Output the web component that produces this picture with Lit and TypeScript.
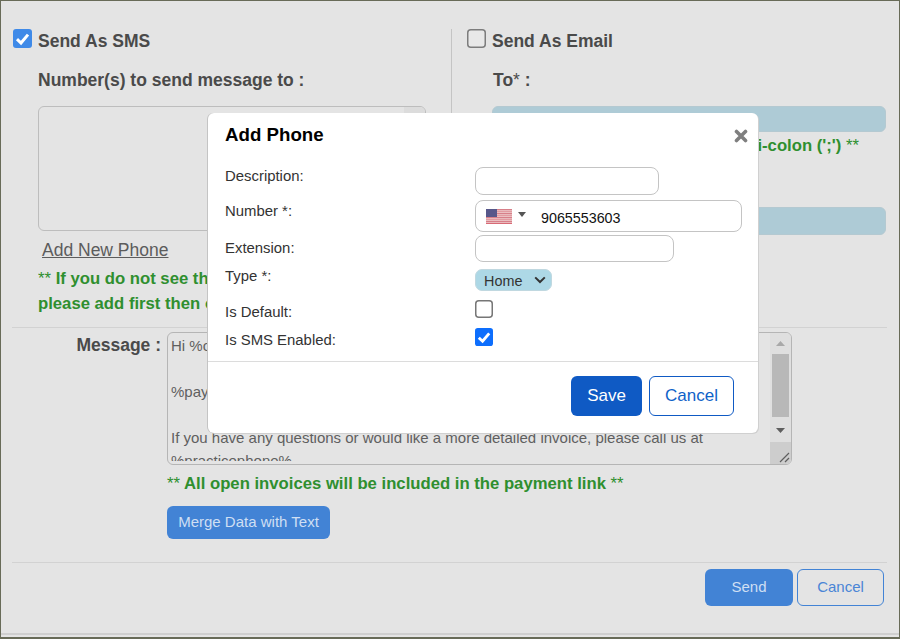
import { LitElement, html, css, svg } from "lit";
import { customElement } from "lit/decorators.js";

const check = svg`<path d="M4 10.2 L8 14 L15 5.6" fill="none" stroke="#fff" stroke-width="3"/>`;

@customElement("app-root")
export class AppRoot extends LitElement {
  static styles = css`
    :host {
      display: block;
      position: relative;
      width: 900px;
      height: 639px;
      box-sizing: border-box;
      background: #e4e4e4;
      border: 1px solid #686b58;
      border-bottom: 2px solid #686b58;
      font-family: "Liberation Sans", Arial, sans-serif;
      color: #4a4a4a;
      overflow: hidden;
    }
    .page {
      height: 634px;
      box-sizing: border-box;
      border-bottom: 2px solid #cfcfcf;
      padding: 0 12px 0 11px;
      display: flex;
      flex-direction: column;
    }
    .top {
      display: grid;
      grid-template-columns: 440px 1fr;
      height: 327px;
      padding-top: 28px;
      box-sizing: border-box;
      border-bottom: 1px solid #d2d2d2;
      flex: none;
    }
    .col-l { border-right: 1px solid #c4c4c4; height: 220px; }
    .col-r { padding-left: 15px; }
    .head { display: flex; align-items: flex-start; gap: 6px; height: 19px; font-size: 17.5px; font-weight: bold; }
    .col-l .head { margin-left: 1px; }
    .head span { line-height: 24px; }
    .box { width: 19px; height: 19px; flex: none; display: block; }
    .sub { font-size: 17.5px; font-weight: bold; margin: 22px 0 0 26px; line-height: 20px; height: 20px; }
    .sub small { font-size: 17.5px; font-weight: normal; }
    .list {
      margin: 16px 0 0 26px;
      width: 388px; height: 125px;
      box-sizing: border-box;
      border: 1px solid #bdbdbd;
      border-radius: 6px;
      display: flex;
      justify-content: flex-end;
      overflow: hidden;
    }
    .list i { display: block; width: 21px; background: #dcdcdc; }
    .add { display: block; margin: 9px 0 0 30px; font-size: 17.5px; line-height: 20px; color: #5c5c5c; text-decoration: underline; }
    .note { margin: 6px 0 0 26px; font-size: 16.7px; font-weight: bold; line-height: 25px; color: #2f8f2f; white-space: nowrap; overflow: hidden; }
    .note small { font-size: 16.7px; font-weight: normal; }
    .col-r .sub { margin-left: 26px; }
    .field { margin: 16px 0 0 25px; height: 26px; background: #aecbd6; border: 1px solid #b4c9d1; box-sizing: border-box; border-radius: 6px; width: 394px; }
    .hint { margin: 2px 0 0 25px; height: 26px; width: 367px; font-size: 16.7px; font-weight: bold; line-height: 24px; color: #2f8f2f; white-space: nowrap; text-align: right; direction: rtl; }
    .hint span { direction: ltr; unicode-bidi: isolate; }
    .hint small { font-size: 16.7px; font-weight: normal; }
    .f2 { margin-top: 47px; height: 28px; }

    .msg { display: grid; grid-template-columns: 155px 1fr; flex: none; padding-top: 4px; }
    .msg label { font-size: 17.5px; font-weight: bold; text-align: right; padding: 1px 6px 0 0; line-height: 24px; height: 24px; }
    .ta {
      width: 625px; height: 133px; box-sizing: border-box;
      border: 1px solid #b5b5b5; border-radius: 6px;
      display: flex; align-items: flex-start; overflow: hidden;
    }
    .ta-text { flex: 1; box-sizing: border-box; height: 128px; padding: 1px 0 0 3px; font-size: 15px; line-height: 23px; color: #5f5f5f; white-space: pre; overflow: hidden; }
    .sb { width: 21px; height: 131px; flex: none; background: #dfdfdf; display: flex; flex-direction: column; align-items: center; }
    .sb svg { display: block; flex: none; }
    .thumb { width: 17px; height: 63px; background: #b8b8b8; margin: 3px 0 8px; }
    .grip { margin-top: auto; width: 21px; height: 22px; background: #cdcdcd; }
    .note2 { margin: 9px 0 0 0; font-size: 16.7px; font-weight: bold; line-height: 20px; color: #2f8f2f; white-space: nowrap; }
    .note2 small { font-size: 16.7px; font-weight: normal; }
    .merge {
      display: block; margin-top: 12px; width: 163px; height: 33px; border: 0; border-radius: 6px;
      background: #4283d5; color: #cfdff3; font: 15px "Liberation Sans", Arial, sans-serif; padding: 0 0 2px;
    }
    .hr2 { height: 1px; background: #d2d2d2; margin-top: 23px; flex: none; }
    .foot { display: flex; justify-content: flex-end; gap: 4px; padding: 6px 3px 0 0; }
    .send, .cancel { box-sizing: border-box; height: 37px; border-radius: 6px; font: 15px "Liberation Sans", Arial, sans-serif; padding: 0 0 2px; }
    .send { width: 88px; background: #4283d5; border: 0; color: #cfdff3; }
    .cancel { width: 87px; background: transparent; border: 1px solid #4283d5; color: #4a85d6; }

    .modal {
      position: absolute; left: 207px; top: 112px;
      width: 550px; height: 320px; box-sizing: border-box;
      background: #fff; border-radius: 6px;
      box-shadow: -1px 0 0 #c4c4c4, 1px 1px 0 #d0d0d0;
      color: #333;
    }
    .m-head { display: flex; justify-content: space-between; align-items: flex-start; height: 54px; padding: 10px 10px 0 17px; box-sizing: border-box; }
    .m-head h2 { margin: 0; font-size: 18.7px; line-height: 23px; font-weight: bold; color: #000; }
    .m-head svg { display: block; margin-top: 6px; }
    .rows { padding-left: 17px; height: 195px; box-sizing: border-box; border-bottom: 1px solid #dcdcdc; }
    .row { display: grid; grid-template-columns: 250px 1fr; align-items: start; }
    .row > span { font-size: 14.9px; line-height: 18px; color: #333; }
    .inp { display: block; box-sizing: border-box; border: 1px solid #c4c4c4; border-radius: 8px; background: #fff; }
    .r1 { height: 33px; } .r1 .inp { width: 184px; height: 28px; }
    .r2 { height: 35px; } .r2 > span { padding-top: 2px; }
    .r2 .inp { width: 267px; height: 32px; display: flex; align-items: center; padding-left: 10px; }
    .r3 { height: 34px; } .r3 > span { padding-top: 4px; } .r3 .inp { width: 199px; height: 27px; }
    .r4 { height: 31px; } .r4 > span { margin-top: -2px; }
    .r5 { height: 28px; } .r5 > span { padding-top: 3px; }
    .r6 { height: 30px; } .r6 > span { padding-top: 3px; }
    .flag { display: block; flex: none; }
    .caret { display: block; margin: 0 0 3px 6px; flex: none; }
    .num { font: 14.3px "Liberation Sans", Arial, sans-serif; color: #111; margin-left: 15px; padding-top: 3px; }
    .sel {
      box-sizing: border-box; width: 77px; height: 22px; background: #add8e6; border: 1px solid #c0d8e0; border-radius: 7px;
      display: flex; align-items: center; justify-content: space-between; padding: 0 5px 0 8px; font-size: 14.4px; color: #333;
    }
    .sel span { padding-top: 2px; }
    .m-foot { display: flex; justify-content: flex-end; gap: 7px; padding: 14px 24px 0 0; }
    .save, .mcancel { box-sizing: border-box; height: 40px; border-radius: 6px; font: 17px "Liberation Sans", Arial, sans-serif; padding: 0; }
    .save { width: 71px; background: #0f5ac4; border: 0; color: #fff; }
    .mcancel { width: 85px; background: #fff; border: 1px solid #0f5ac4; color: #0f62c8; }
  `;

  private flag() {
    const stripes = [];
    for (let i = 0; i < 7; i++) {
      stripes.push(svg`<rect x="0" y="${i * 2}" width="26" height="1.2" fill="${i % 2 ? "#e29ba1" : "#d77f89"}"/>`);
    }
    return html`<svg class="flag" width="26" height="15" viewBox="0 0 26 15">
      <rect width="26" height="15" fill="#eec8ca"/>${stripes}
      <rect x="0" y="14" width="26" height="1" fill="#d86a76"/>
      <rect width="11" height="8" fill="#57578a"/>
    </svg>`;
  }

  render() {
    return html`
      <div class="page">
        <div class="top">
          <div class="col-l">
            <div class="head">
              <svg class="box" viewBox="0 0 19 19"><rect width="19" height="19" rx="3" fill="#3f8ae8"/>${check}</svg>
              <span>Send As SMS</span>
            </div>
            <div class="sub">Number(s) to send message to :</div>
            <div class="list"><i></i></div>
            <a class="add">Add New Phone</a>
            <div class="note"><small>**</small> If you do not see the number in the list,<br />please add first then choose it</div>
          </div>
          <div class="col-r">
            <div class="head">
              <svg class="box" viewBox="0 0 19 19"><rect x=".75" y=".75" width="17.5" height="17.5" rx="3" fill="#e8e8e8" stroke="#7c7c7c" stroke-width="1.5"/></svg>
              <span>Send As Email</span>
            </div>
            <div class="sub">To<small>*</small> :</div>
            <div class="field"></div>
            <div class="hint"><span>Separate multiple emails by semi-colon (';') <small>**</small></span></div>
            <div class="field f2"></div>
          </div>
        </div>

        <div class="msg">
          <label>Message :</label>
          <div>
            <div class="ta">
              <div class="ta-text">Hi %customername%,

%paymentlink%

If you have any questions or would like a more detailed invoice, please call us at
%practicephone%</div>
              <div class="sb">
                <svg width="21" height="18" viewBox="0 0 21 18"><path d="M6 13 L10.5 8 L15 13 Z" fill="#a9a9a9"/></svg>
                <div class="thumb"></div>
                <svg width="21" height="14" viewBox="0 0 21 14"><path d="M6 3 L15 3 L10.5 8 Z" fill="#5e5e5e"/></svg>
                <div class="grip">
                  <svg width="21" height="22" viewBox="0 0 21 22"><path d="M10 20 L19 11 M15 20 L19 16" stroke="#5e5e5e" stroke-width="1.2" fill="none"/></svg>
                </div>
              </div>
            </div>
            <div class="note2"><small>**</small> All open invoices will be included in the payment link <small>**</small></div>
            <button class="merge">Merge Data with Text</button>
          </div>
        </div>

        <div class="hr2"></div>
        <div class="foot">
          <button class="send">Send</button>
          <button class="cancel">Cancel</button>
        </div>
      </div>

      <div class="modal">
        <div class="m-head">
          <h2>Add Phone</h2>
          <svg width="14" height="14" viewBox="0 0 14 14"><path d="M2.5 2.5 L11.5 11.5 M11.5 2.5 L2.5 11.5" stroke="#7f7f7f" stroke-width="3.6" stroke-linecap="round"/></svg>
        </div>
        <div class="rows">
          <div class="row r1"><span>Description:</span><div class="inp"></div></div>
          <div class="row r2"><span>Number *:</span>
            <div class="inp">
              ${this.flag()}
              <svg class="caret" width="8" height="5" viewBox="0 0 8 5"><path d="M0 0 H8 L4 5 Z" fill="#555"/></svg>
              <span class="num">9065553603</span>
            </div>
          </div>
          <div class="row r3"><span>Extension:</span><div class="inp"></div></div>
          <div class="row r4"><span>Type *:</span>
            <div class="sel"><span>Home</span>
              <svg width="12" height="8" viewBox="0 0 12 8"><path d="M1.2 1.4 L6 6 L10.8 1.4" fill="none" stroke="#333" stroke-width="2"/></svg>
            </div>
          </div>
          <div class="row r5"><span>Is Default:</span>
            <svg class="box" style="width:18px;height:18px" viewBox="0 0 18 18"><rect x=".75" y=".75" width="16.5" height="16.5" rx="3" fill="#fff" stroke="#767676" stroke-width="1.5"/></svg>
          </div>
          <div class="row r6"><span>Is SMS Enabled:</span>
            <svg class="box" style="width:18px;height:18px" viewBox="0 0 19 19"><rect width="19" height="19" rx="3" fill="#0d6efd"/>${check}</svg>
          </div>
        </div>
        <div class="m-foot">
          <button class="save">Save</button>
          <button class="mcancel">Cancel</button>
        </div>
      </div>
    `;
  }
}
